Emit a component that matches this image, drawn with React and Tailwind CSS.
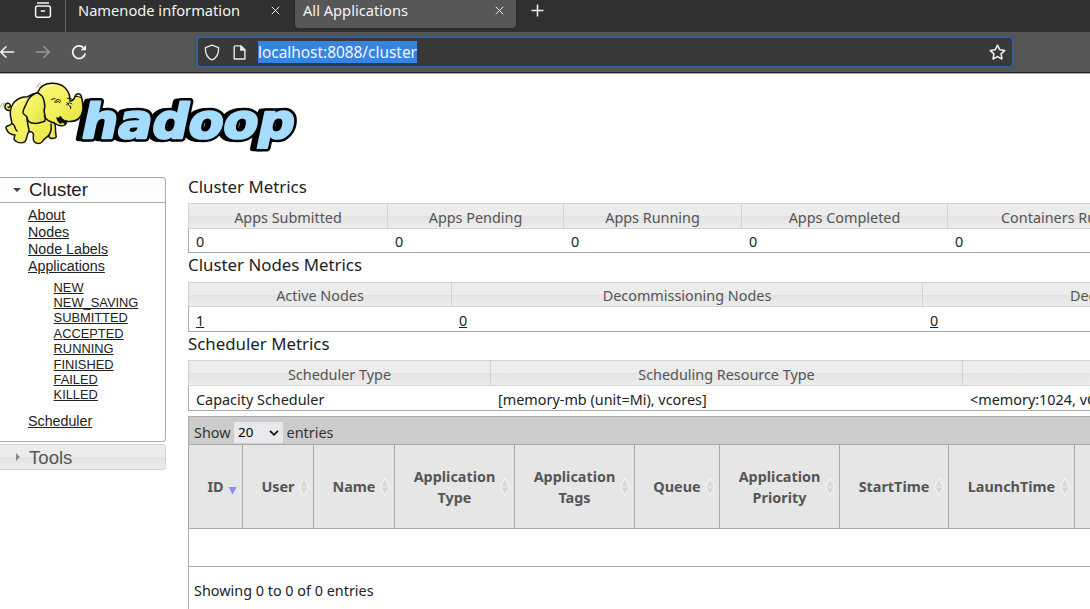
const heading = "bg-[linear-gradient(#ececec_0%,#ececec_50%,#e3e3e3_52%,#ededed_100%)]";

function HadoopLogo() {
  return (
    <svg className="block h-[84px] w-[300px]" viewBox="0 0 900 252">
      <defs>
        <linearGradient id="hide" x1="0" y1="0" x2="1" y2="1">
          <stop offset="0" stopColor="#f7f57b" />
          <stop offset="0.5" stopColor="#f4f25e" />
          <stop offset="1" stopColor="#e0dc38" />
        </linearGradient>
      </defs>
      <g fontFamily="DejaVu Sans" fontWeight="700" fontSize="143" strokeLinejoin="round">
        <g transform="translate(236 186) skewX(-12)">
          <text x="-10" y="1" textLength="638" lengthAdjust="spacingAndGlyphs" fill="#000" stroke="#000" strokeWidth="20">hadoop</text>
          <text x="2" y="0" textLength="638" lengthAdjust="spacingAndGlyphs" fill="#a3dcff" stroke="#000" strokeWidth="22" paintOrder="stroke">hadoop</text>
          <text x="2" y="0" textLength="638" lengthAdjust="spacingAndGlyphs" fill="#a3dcff" stroke="#a3dcff" strokeWidth="7">hadoop</text>
        </g>
      </g>
      <g fill="url(#hide)" stroke="#111" strokeWidth="4.5" strokeLinejoin="round" strokeLinecap="round">
        <path d="M38 100C26 108 13 101 15 90C17 80 29 79 31 88C32 93 27 96 24 93" />
        <path d="M83 62C50 62 29 85 31 116C32 130 37 136 35 143C29 151 15 149 18 157C23 170 34 177 45 177C42 187 40 191 47 195C56 202 68 202 75 197C82 187 80 175 86 168C91 165 97 168 100 173C102 183 96 190 103 197C110 205 122 204 127 197C132 188 142 184 147 177C145 185 151 189 159 187C168 188 170 182 168 177C164 163 170 154 163 141C180 154 198 151 200 136C224 139 243 131 248 105C251 84 246 69 243 58C239 51 229 52 226 59C223 68 219 75 210 75C211 43 190 22 157 22C132 22 118 35 113 50C103 51 92 56 83 62Z" />
        <path d="M113 50C98 54 88 61 81 78C76 92 68 101 69 110C71 118 78 118 81 122C79 135 91 142 103 142C114 144 124 139 134 136C139 127 133 113 132 104C138 91 131 63 124 58Q119 55 113 50Z" />
        <path d="M87 168C88 152 80 146 82 127M35 143C48 144 42 159 51 165M147 177Q156 163 153 144M133 119C139 134 149 137 163 141" fill="none" />
        <path d="M171 126C176 143 196 151 200 136C190 134 184 129 181 122" fill="#111" />
        <path d="M180 145Q188 135 194 145Q188 151 180 145Z" fill="#e7d73b" stroke="none" />
        <path d="M164 78C169 68 179 68 182 76M167 79Q176 72 180 80M201 80L209 91M199 87Q209 75 216 84M202 67Q210 63 217 70M212 91V98M227 61Q236 60 242 65M154 70L165 68" fill="none" strokeWidth="3" />
      </g>
      <g fill="none" stroke="#777" strokeWidth="2">
        <path d="M110 35Q113 25 121 21M117 40Q118 31 126 27M2 95Q2 83 12 79M9 91Q8 86 15 82" />
      </g>
      <g fill="none" stroke="#ffff9c" strokeWidth="6" strokeLinecap="round">
        <path d="M128 45Q139 29 157 29M43 91Q53 72 76 71" />
      </g>
    </svg>
  );
}

function TabClose() {
  return (
    <svg className="size-[9px]" viewBox="0 0 9 9" stroke="#e8e8e8" strokeWidth="1"><path d="M.7 .7L8.3 8.3M8.3 .7L.7 8.3" /></svg>
  );
}

function Browser() {
  return (
    <header className="font-['Noto_Sans',sans-serif] text-[#f5f5f5]">
      <div className="flex h-8 bg-[#303030]">
        <div className="flex w-[66px] justify-end border-r border-[#666] pr-[13px]">
          <svg className="mt-[2px] h-4 w-[18px]" viewBox="0 0 18 16" fill="none" stroke="#f5f5f5" strokeWidth="1.5">
            <path d="M3 .9H15M6.8 9H11.2" /><rect x="1.6" y="4" width="14.8" height="11.2" rx="2" />
          </svg>
        </div>
        <div className="flex h-5 w-[229px] items-center justify-between pl-3 pr-[15px]">
          <span className="text-[14.67px] leading-5">Namenode information</span>
          <TabClose />
        </div>
        <div className="flex h-7 w-[221px] items-start justify-between rounded-b-[4px] bg-[#575757] pl-2 pr-3 shadow-[0_0_3px_#222]">
          <span className="text-[14.67px] leading-5">All Applications</span>
          <span className="flex h-5 items-center"><TabClose /></span>
        </div>
        <svg className="ml-[15px] mt-[4px] size-[13px]" viewBox="0 0 13 13" stroke="#f5f5f5" strokeWidth="1.5"><path d="M6.5 .5V12.5M.5 6.5H12.5" /></svg>
      </div>
      <div className="flex h-[41px] border-b border-[#222] bg-[#575757] pt-1">
        <svg className="mt-[9px] h-[14px] w-[15px]" viewBox="0 0 15 14" fill="none" stroke="#f5f5f5" strokeWidth="1.5" strokeLinecap="round" strokeLinejoin="round"><path d="M13.5 7H.8M6 1.7L.7 7L6 12.3" /></svg>
        <svg className="ml-[20px] mt-[9px] h-[14px] w-[16px]" viewBox="0 0 16 14" fill="none" stroke="#999" strokeWidth="1.5" strokeLinecap="round" strokeLinejoin="round"><path d="M1.5 7H14.2M9 1.7L14.3 7L9 12.3" /></svg>
        <svg className="ml-[20px] mt-[8px] size-4" viewBox="0 0 16 16" fill="none" stroke="#f5f5f5" strokeWidth="1.7"><path d="M14.2 9.5A6.3 6.3 0 1 1 12.4 3.6" /><path d="M15 1V6.3H9.6Z" fill="#f5f5f5" stroke="none" /></svg>
        <div className="ml-[109px] flex h-8 w-[818px] items-center rounded-[4px] border-2 border-[#34609b] bg-[#393939] pl-[6px] pr-[6px] shadow-[0_0_3px_#444]">
          <svg className="h-[17px] w-4" viewBox="0 0 16 17" fill="none" stroke="#e8e8e8" strokeWidth="1.4" strokeLinejoin="round"><path d="M8 1.1L14.6 3.7C14.8 9.6 12.6 14 8 15.9C3.4 14 1.2 9.6 1.4 3.7Z" /></svg>
          <svg className="ml-[13px] h-[15px] w-[13px]" viewBox="0 0 13 15" fill="none" stroke="#e8e8e8" strokeWidth="1.4" strokeLinejoin="round"><path d="M2 .9H7.8L11.9 5V14H1.2V1.7Z" /><path d="M7.8 .9V5H11.9Z" fill="#e8e8e8" /></svg>
          <span className="ml-[12px] h-[22px] whitespace-nowrap bg-[#3584e4] text-[15.4px] leading-[23px]">localhost:8088/cluster</span>
          <svg className="ml-auto size-[17px]" viewBox="0 0 17 17" fill="none" stroke="#f0f0f0" strokeWidth="1.5" strokeLinejoin="round"><path d="M8.5 1.2L10.7 5.7L15.8 6.4L12.1 9.9L13 15L8.5 12.6L4 15L4.9 9.9L1.2 6.4L6.3 5.7Z" /></svg>
        </div>
      </div>
      <div className="h-px bg-[#aaa]" />
    </header>
  );
}

function Sidebar() {
  return (
    <aside className="w-[166px] font-['Liberation_Sans',sans-serif] text-[#222]">
      <div className="flex h-[26px] items-center rounded-tr-[4px] border border-l-0 border-[#aaa] bg-[linear-gradient(#fafafa,#fff)] pl-[13px]">
        <svg className="h-1 w-2" viewBox="0 0 8 4"><path d="M0 0H8L4 4Z" fill="#454545" /></svg>
        <span className="ml-[8px] text-[18.6px] leading-none">Cluster</span>
      </div>
      <div className="h-[239px] rounded-br-[4px] border-b border-r border-[#aaa] pl-7 pt-[4px] text-[14.25px] underline">
        {["About", "Nodes", "Node Labels", "Applications"].map((t) => <div key={t} className="h-[17px] leading-[17px]">{t}</div>)}
        <ul className="mt-[4.6px] pl-[25.6px] text-[12.85px]">
          {["NEW", "NEW_SAVING", "SUBMITTED", "ACCEPTED", "RUNNING", "FINISHED", "FAILED", "KILLED"].map((t) => <li key={t} className="h-[15.4px] leading-[15.4px]">{t}</li>)}
        </ul>
        <div className="mt-[10px] leading-[17px]">Scheduler</div>
      </div>
      <div className={`mt-[2px] flex h-[26px] items-center rounded-r-[4px] border border-l-0 border-[#d3d3d3] pl-[16px] text-[#555] ${heading}`}>
        <svg className="h-2 w-1" viewBox="0 0 4 8"><path d="M0 0V8L4 4Z" fill="#888" /></svg>
        <span className="ml-[9px] pt-[2px] text-[18.6px] leading-none">Tools</span>
      </div>
    </aside>
  );
}

function Metrics({ title, titleCls, cols, headCls, rowCls, link }) {
  return (
    <section>
      <h2 className={`text-[16.85px] ${titleCls}`}>{title}</h2>
      <div className="border-l border-[#aaa] text-[14.4px]">
        <div className={`-ml-px flex border-y border-l border-[#d3d3d3] text-[#555] ${heading} ${headCls}`}>
          {cols.map(([w, h, , align]) => (
            <div key={w} className={`shrink-0 whitespace-nowrap border-r border-[#d3d3d3] ${w} ${align || "text-center"}`}>{h}</div>
          ))}
        </div>
        <div className={`flex border-b border-[#aaa] ${rowCls}`}>
          {cols.map(([w, , v]) => (
            <div key={w} className={`shrink-0 whitespace-nowrap pl-[7px] ${w}`}><span className={link ? "underline" : ""}>{v}</span></div>
          ))}
        </div>
      </div>
    </section>
  );
}

const appCols = [
  ["w-[54px]", "ID"], ["w-[71px]", "User"], ["w-[81px]", "Name"], ["w-[120px]", "Application Type"],
  ["w-[120px]", "Application Tags"], ["w-[85px]", "Queue"], ["w-[120px]", "Application Priority"],
  ["w-[109px]", "StartTime"], ["w-[126px]", "LaunchTime"],
];

function Applications() {
  return (
    <section className="mt-[5px] h-[200px] border-l border-t border-[#aaa] text-[14.4px]">
      <div className="flex h-[28px] items-start border-b border-[#aaa] bg-[#ccc] pl-[5px] text-[#333]">
        <span className="mt-[5px] leading-[22px]">Show</span>
        <span className="ml-[3px] mt-[5px] flex h-[21px] w-[49px] items-center justify-between bg-[#e9e9ed] pl-[4.5px] pr-[4px] pt-px text-[13.33px] text-black">
          20
          <svg className="h-[6px] w-[10px]" viewBox="0 0 10 6" fill="none" stroke="#111" strokeWidth="1.7"><path d="M1 .8L5 4.8L9 .8" /></svg>
        </span>
        <span className="ml-[4px] mt-[5px] leading-[22px]">entries</span>
      </div>
      <div className="flex h-[84px] border-b border-[#aaa] bg-[#e6e6e6] font-bold text-[#555]">
        {appCols.map(([w, t], i) => (
          <div key={t} className={`relative flex shrink-0 items-center justify-center border-r border-[#aaa] pl-[14.5px] pr-[14.5px] text-center leading-[21px] ${w}`}>
            {t}
            <svg className="absolute right-[4px] top-[33px] h-[18px] w-[10px]" viewBox="0 0 10 18">
              {i === 0
                ? <path d="M.6 9H8.6L4.6 16.5Z" fill="#8c8cff" />
                : <><path d="M5 2L8.6 8.2H1.4ZM1.4 9.8H8.6L5 16Z" fill="#d8d8d8" /><path d="M5 .7L9.3 8.2V9.8L5 17.3L.7 9.8V8.2Z" fill="none" stroke="#fff" strokeWidth=".8" strokeDasharray="2 .6" /></>}
            </svg>
          </div>
        ))}
      </div>
      <div className="h-[38px] border-b border-[#aaa]" />
      <div className="pl-[5px] pt-[14px] leading-[20px]">Showing 0 to 0 of 0 entries</div>
    </section>
  );
}

export default function App() {
  return (
    <div className="h-[609px] w-[1090px] overflow-hidden bg-white">
      <Browser />
      <div className="h-[103px] pt-[2px]"><HadoopLogo /></div>
      <div className="flex">
        <Sidebar />
        <main className="ml-[22px] w-[902px] overflow-hidden font-['Noto_Sans',sans-serif] text-[#222]">
          <Metrics title="Cluster Metrics" titleCls="h-[26px] leading-[20px]" headCls="h-[26px] leading-[28px]" rowCls="h-[24px] leading-[26px]"
            cols={[["w-[199px]", "Apps Submitted", "0"], ["w-[176px]", "Apps Pending", "0"], ["w-[178px]", "Apps Running", "0"], ["w-[206px]", "Apps Completed", "0"], ["w-[230px]", "Containers Running", "0", "pl-[53px]"]]} />
          <Metrics title="Cluster Nodes Metrics" titleCls="h-[29px] leading-[24px]" headCls="h-[25px] leading-[26px]" rowCls="h-[25px] leading-[28px]" link
            cols={[["w-[263px]", "Active Nodes", "1"], ["w-[471px]", "Decommissioning Nodes", "0"], ["w-[472px]", "Decommissioned Nodes", "0", "pl-[147px]"]]} />
          <Metrics title="Scheduler Metrics" titleCls="h-[28px] leading-[24px]" headCls="h-[26px] leading-[28px]" rowCls="h-[25px] leading-[27px]"
            cols={[["w-[302px]", "Scheduler Type", "Capacity Scheduler"], ["w-[472px]", "Scheduling Resource Type", "[memory-mb (unit=Mi), vcores]"], ["w-[470px]", "", "<memory:1024, vCores:1>"]]} />
          <Applications />
        </main>
      </div>
    </div>
  );
}
